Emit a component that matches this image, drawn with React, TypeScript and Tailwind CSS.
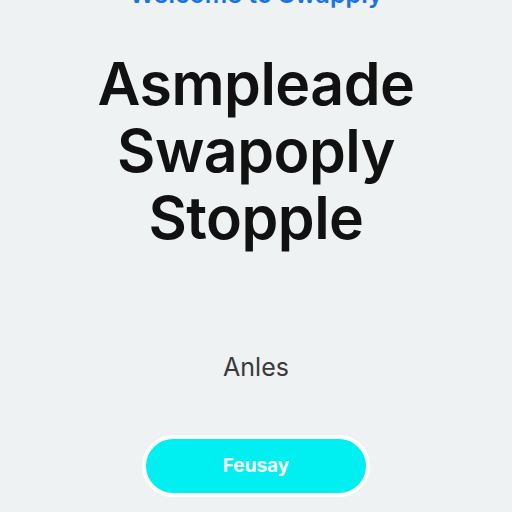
export default function App() {
  return (
    <div
      className="w-[512px] h-[512px] overflow-hidden bg-[#eef2f3] flex flex-col items-center"
      style={{ fontFamily: "Inter, 'Noto Sans', sans-serif" }}
    >
      <div className="h-[10px] w-full overflow-hidden flex justify-center">
        <p className="-mt-[20px] text-[25px] leading-[28px] font-semibold text-[#1b74e0] whitespace-nowrap">
          Welcome to Swapply
        </p>
      </div>

      <h1 className="mt-[40px] text-[59px] leading-[67px] font-semibold text-[#111111] text-center tracking-[-0.5px]">
        Asmpleade
        <br />
        Swapoply
        <br />
        Stopple
      </h1>

      <p className="mt-[101px] text-[25px] leading-[30px] text-[#3a3a3a]">Anles</p>

      <button className="mt-[53px] w-[228px] h-[62px] rounded-full bg-[#00f0f2] border-[4px] border-white text-white text-[19px] font-bold">
        Feusay
      </button>
    </div>
  )
}
